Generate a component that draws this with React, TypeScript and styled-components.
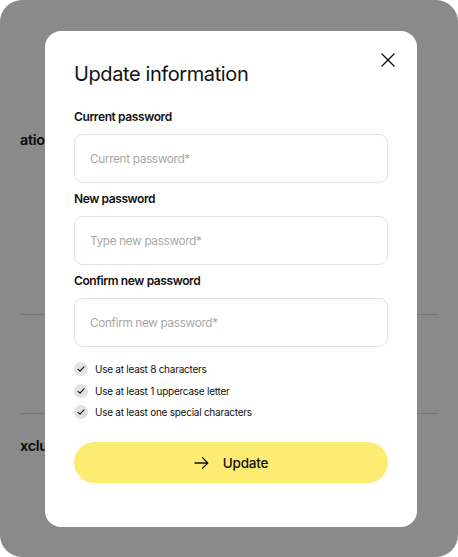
import styled, { createGlobalStyle } from "styled-components";

const GlobalStyle = createGlobalStyle`
    html, body {
        margin: 0;
        padding: 0;
        background: #ffffff;
    }
    * {
        box-sizing: border-box;
    }
    body {
        font-family: Inter, "Noto Sans", "Liberation Sans", sans-serif;
        color: #111111;
    }
`;

const rules = ["Use at least 8 characters", "Use at least 1 uppercase letter", "Use at least one special characters"];

const fields = [
    { label: "Current password", placeholder: "Current password*" },
    { label: "New password", placeholder: "Type new password*" },
    { label: "Confirm new password", placeholder: "Confirm new password*" },
];

const App = () => {
    return (
        <>
            <GlobalStyle />
            <Screen>
                <Page>
                    <SectionTitle>ation</SectionTitle>
                    <Divider top={164} />
                    <Divider top={98} />
                    <SectionTitle gap={22}>xclus</SectionTitle>
                </Page>
                <Backdrop />
                <Modal>
                    <Title>Update information</Title>
                    <Close aria-label="close">
                        <svg width="14" height="14" viewBox="0 0 14 14" fill="none">
                            <path d="M1 1L13 13M13 1L1 13" stroke="#111" strokeWidth="1.4" strokeLinecap="round" />
                        </svg>
                    </Close>
                    <Form>
                        {fields.map((f) => (
                            <Field key={f.label}>
                                <Label>{f.label}</Label>
                                <Input type="password" placeholder={f.placeholder} />
                            </Field>
                        ))}
                    </Form>
                    <Rules>
                        {rules.map((r) => (
                            <Rule key={r}>
                                <Check>
                                    <svg width="8" height="8" viewBox="0 0 8 8" fill="none">
                                        <path
                                            d="M1 4.3L3 6.2L7 1.8"
                                            stroke="#111"
                                            strokeWidth="1.1"
                                            strokeLinecap="round"
                                            strokeLinejoin="round"
                                        />
                                    </svg>
                                </Check>
                                {r}
                            </Rule>
                        ))}
                    </Rules>
                    <Submit>
                        <svg width="15" height="14" viewBox="0 0 15 14" fill="none">
                            <path
                                d="M1 7H13.8M8.5 1.6L13.8 7L8.5 12.4"
                                stroke="#111"
                                strokeWidth="1.3"
                                strokeLinecap="round"
                                strokeLinejoin="round"
                            />
                        </svg>
                        Update
                    </Submit>
                </Modal>
            </Screen>
        </>
    );
};

export default App;

const Screen = styled.div`
    position: relative;
    width: 458px;
    height: 557px;
    border-radius: 22px;
    overflow: hidden;
    background: #ffffff;
`;

const Page = styled.div`
    padding: 130px 20px 0;
`;

const SectionTitle = styled.div<{ gap?: number }>`
    margin-top: ${(props) => props.gap ?? 0}px;
    font-size: 14.5px;
    font-weight: 600;
    line-height: 20px;
    letter-spacing: -0.3px;
    white-space: nowrap;
`;

const Divider = styled.hr<{ top: number }>`
    margin: ${(props) => props.top}px 0 0;
    border: none;
    border-top: 1px solid #dcdcdc;
`;

const Backdrop = styled.div`
    position: absolute;
    inset: 0;
    background: rgba(0, 0, 0, 0.46);
`;

const Modal = styled.div`
    position: absolute;
    left: 45px;
    top: 31px;
    width: 372px;
    height: 496px;
    padding: 31px 29px;
    background: #ffffff;
    border-radius: 16px;
`;

const Title = styled.h2`
    margin: 0;
    font-size: 20px;
    font-weight: 400;
    line-height: 24px;
    letter-spacing: -0.4px;
    color: #111;
`;

const Close = styled.button`
    position: absolute;
    top: 22px;
    right: 22px;
    width: 14px;
    height: 14px;
    padding: 0;
    border: none;
    background: none;
    display: flex;
    cursor: pointer;
`;

const Form = styled.div`
    display: flex;
    flex-direction: column;
    gap: 8px;
    margin-top: 23px;
`;

const Field = styled.label`
    display: flex;
    flex-direction: column;
    gap: 9px;
`;

const Label = styled.span`
    font-size: 12px;
    font-weight: 600;
    line-height: 16px;
    letter-spacing: -0.4px;
    color: #111;
`;

const Input = styled.input`
    width: 314px;
    height: 49px;
    padding: 0 15px;
    border: 1px solid #e3e3e3;
    border-radius: 9px;
    font-family: inherit;
    font-size: 11.8px;
    letter-spacing: -0.35px;
    color: #111;
    outline: none;
    &::placeholder {
        color: #a8a8a8;
    }
`;

const Rules = styled.ul`
    list-style: none;
    margin: 15px 0 0;
    padding: 0;
    display: flex;
    flex-direction: column;
    gap: 7.5px;
`;

const Rule = styled.li`
    display: flex;
    align-items: center;
    gap: 7px;
    height: 14px;
    font-size: 10px;
    line-height: 14px;
    letter-spacing: -0.25px;
    color: #111;
`;

const Check = styled.span`
    width: 14px;
    height: 14px;
    border-radius: 50%;
    background: #e3e3e3;
    display: flex;
    align-items: center;
    justify-content: center;
`;

const Submit = styled.button`
    margin-top: 23px;
    width: 314px;
    height: 41px;
    border: none;
    border-radius: 21px;
    background: #fcec72;
    display: flex;
    align-items: center;
    justify-content: center;
    gap: 14px;
    font-family: inherit;
    font-size: 13.5px;
    font-weight: 500;
    letter-spacing: -0.2px;
    color: #111;
    cursor: pointer;
`;
